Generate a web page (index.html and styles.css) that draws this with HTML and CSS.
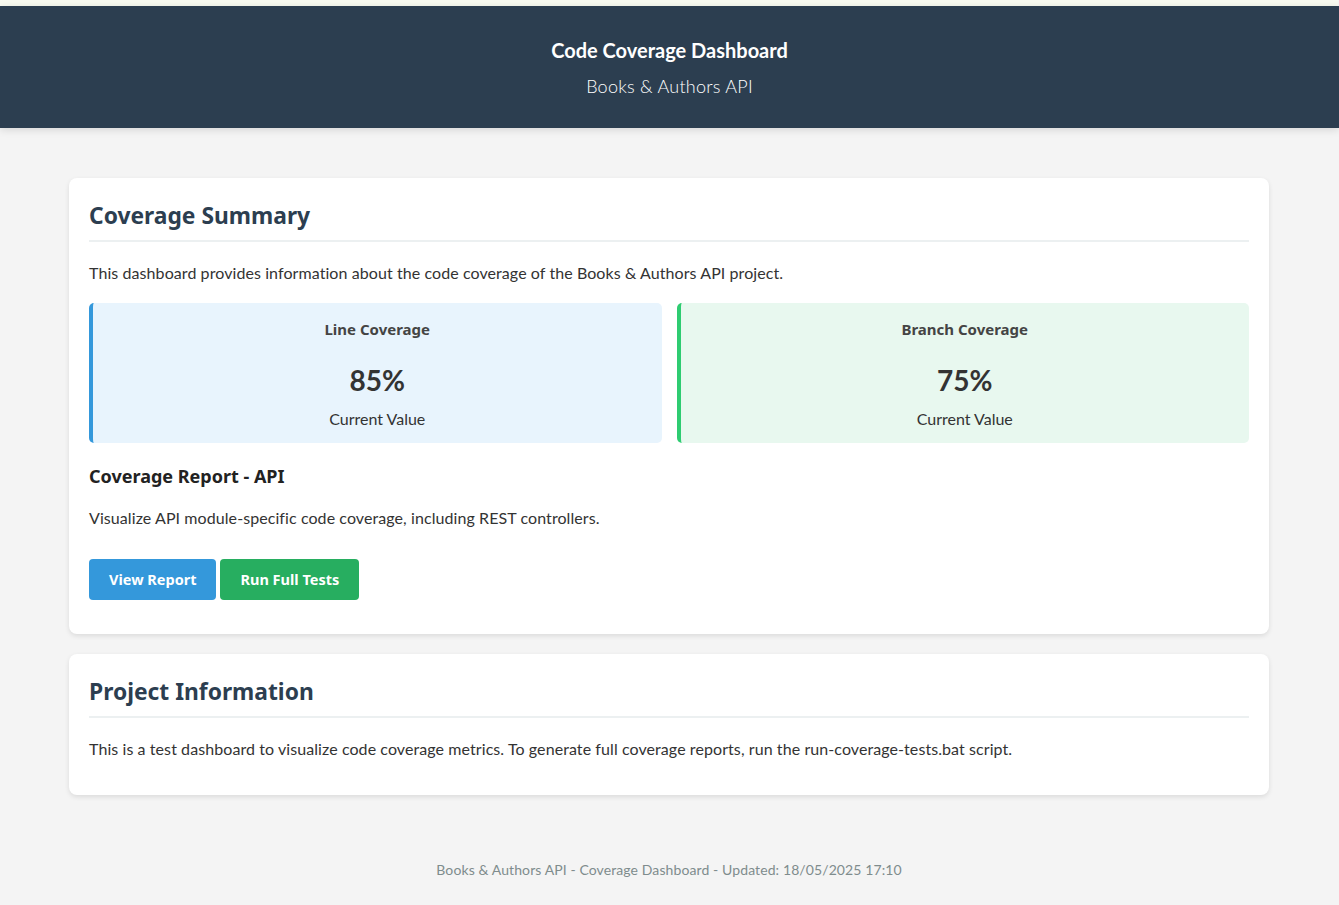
FILE: index.html
```html
<!DOCTYPE html>
<html lang="en">
<head>
<meta charset="utf-8">
<title>Code Coverage Dashboard</title>
<link rel="stylesheet" href="styles.css">
</head>
<body>
<div class="topstrip"></div>
<header class="header">
  <h1 class="header-title">Code Coverage Dashboard</h1>
  <p class="header-sub">Books &amp; Authors API</p>
</header>
<main class="container">
  <section class="card">
    <h2 class="card-title">Coverage Summary</h2>
    <p class="text intro">This dashboard provides information about the code coverage of the Books &amp; Authors API project.</p>
    <div class="metrics">
      <div class="metric metric-line">
        <div class="metric-label">Line Coverage</div>
        <div class="metric-value">85%</div>
        <div class="metric-sub">Current Value</div>
      </div>
      <div class="metric metric-branch">
        <div class="metric-label">Branch Coverage</div>
        <div class="metric-value">75%</div>
        <div class="metric-sub">Current Value</div>
      </div>
    </div>
    <h3 class="report-title">Coverage Report - API</h3>
    <p class="text report-desc">Visualize API module-specific code coverage, including REST controllers.</p>
    <div class="actions">
      <a class="btn btn-blue" href="#">View Report</a>
      <a class="btn btn-green" href="#">Run Full Tests</a>
    </div>
  </section>
  <section class="card">
    <h2 class="card-title">Project Information</h2>
    <p class="text info">This is a test dashboard to visualize code coverage metrics. To generate full coverage reports, run the run-coverage-tests.bat script.</p>
  </section>
</main>
<footer class="footer">Books &amp; Authors API - Coverage Dashboard - Updated: 18/05/2025 17:10</footer>
</body>
</html>
```

FILE: styles.css
```css
html, body {
  margin: 0;
  padding: 0;
}
body {
  background: #f4f4f4;
  font-family: "Lato", "Noto Sans", sans-serif;
  color: #333;
  font-size: 16px;
  padding-right: 1px;
}
.topstrip {
  height: 6px;
  background: #f8faf0;
}
.header {
  background: #2c3e50;
  color: #fff;
  text-align: center;
  padding: 32px 0 30px;
  margin-right: -1px;
  box-shadow: 0 2px 8px rgba(0,0,0,0.12);
}
.header-title {
  margin: 0;
  font-size: 20px;
  line-height: 24px;
  font-weight: 700;
}
.header-sub {
  margin: 12px 0 0;
  font-size: 18px;
  line-height: 24px;
  font-weight: 300;
  letter-spacing: 0.25px;
}
.container {
  width: 1200px;
  margin: 50px auto 0;
}
.card {
  background: #fff;
  border-radius: 8px;
  box-shadow: 0 2px 5px rgba(0,0,0,0.1);
  padding: 20px 20px 34px;
  margin-bottom: 20px;
}
.card-title {
  margin: 0;
  font-family: "Noto Sans", "Lato", sans-serif;
  font-size: 22.8px;
  line-height: 36px;
  font-weight: 700;
  color: #2c3e50;
  padding-bottom: 6px;
  border-bottom: 2px solid #ecf0f1;
}
.text {
  margin: 0;
  font-size: 16px;
  line-height: 24px;
  color: #333;
  letter-spacing: 0.08px;
}
.intro { margin: 19px 0 18px; }
.info { margin-top: 19px; }
.metrics {
  display: grid;
  grid-template-columns: 1fr 1fr;
  gap: 15px;
}
.metric {
  border-radius: 5px;
  border-left: 4px solid #3498db;
  background: #e8f4fd;
  padding: 15px 20px 13px;
  text-align: center;
}
.metric-branch {
  border-left-color: #2ecc71;
  background: #e8f8ef;
}
.metric-label {
  font-family: "Noto Sans", "Lato", sans-serif;
  font-size: 15px;
  line-height: 22px;
  font-weight: 700;
  color: #444;
}
.metric-value {
  font-size: 28px;
  line-height: 34px;
  font-weight: 700;
  color: #333;
  margin: 23px 0 11px;
}
.metric-sub {
  font-size: 16px;
  line-height: 22px;
  color: #333;
}
.report-title {
  margin: 21px 0 0;
  font-family: "Noto Sans", "Lato", sans-serif;
  font-size: 18px;
  line-height: 24px;
  font-weight: 700;
  color: #222;
}
.report-desc { margin-top: 18px; }
.actions {
  margin-top: 29px;
  display: flex;
  gap: 4px;
}
.btn {
  display: inline-block;
  padding: 10px 20px;
  font-family: "Noto Sans", "Lato", sans-serif;
  font-size: 14.5px;
  line-height: 21px;
  font-weight: 700;
  color: #fff;
  text-decoration: none;
  border-radius: 4px;
}
.btn-blue { background: #3498db; }
.btn-green { background: #27ae60; }
.footer {
  text-align: center;
  font-size: 14px;
  line-height: 20px;
  color: #7f8c8d;
  letter-spacing: 0.1px;
  margin-top: 65px;
  padding-bottom: 25px;
}
```
